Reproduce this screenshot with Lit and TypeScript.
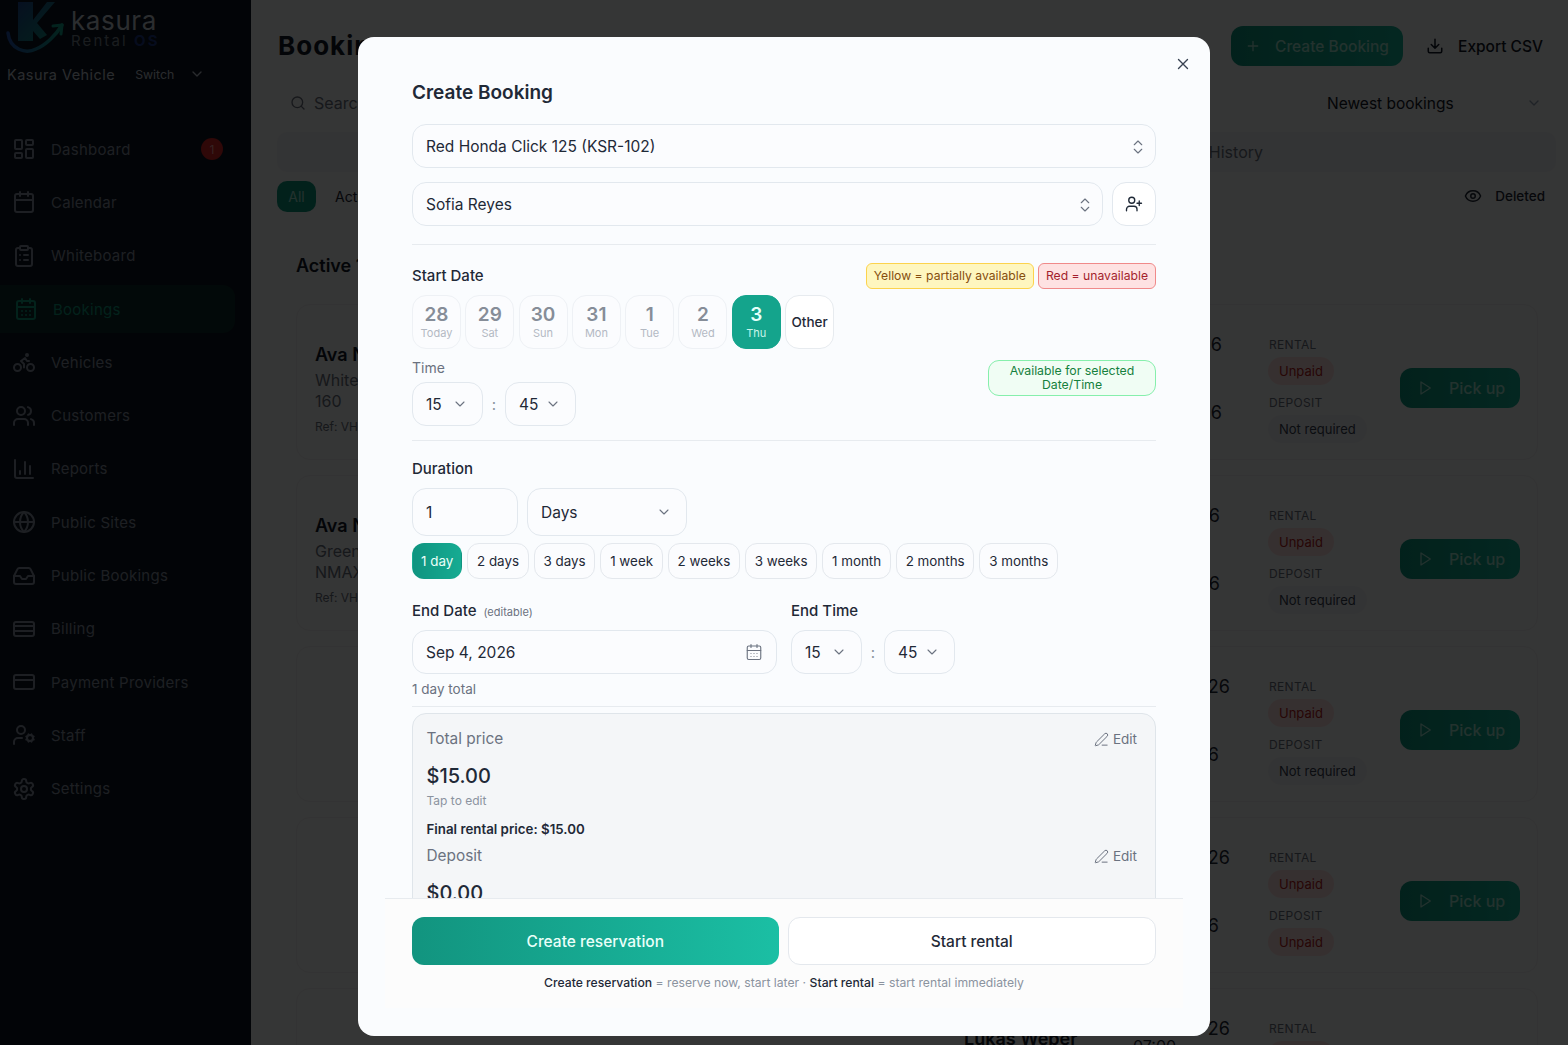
import { LitElement, html, css, svg } from "lit";
import { customElement } from "lit/decorators.js";

const ic = (body: unknown, size = 24, sw = 2, cls = "") =>
  html`<svg class="ic ${cls}" width=${size} height=${size} viewBox="0 0 24 24" fill="none" stroke="currentColor" stroke-width=${sw} stroke-linecap="round" stroke-linejoin="round">${body}</svg>`;

const I = {
  dash: svg`<rect x="3" y="3" width="7" height="9" rx="1"/><rect x="14" y="3" width="7" height="5" rx="1"/><rect x="14" y="12" width="7" height="9" rx="1"/><rect x="3" y="16" width="7" height="5" rx="1"/>`,
  cal: svg`<path d="M8 2v4M16 2v4"/><rect x="3" y="4" width="18" height="18" rx="2"/><path d="M3 10h18"/>`,
  calDays: svg`<path d="M8 2v4M16 2v4"/><rect x="3" y="4" width="18" height="18" rx="2"/><path d="M3 10h18M8 14h.01M12 14h.01M16 14h.01M8 18h.01M12 18h.01M16 18h.01"/>`,
  clip: svg`<rect x="8" y="2" width="8" height="4" rx="1"/><path d="M16 4h2a2 2 0 0 1 2 2v14a2 2 0 0 1-2 2H6a2 2 0 0 1-2-2V6a2 2 0 0 1 2-2h2M12 11h4M12 16h4M8 11h.01M8 16h.01"/>`,
  bike: svg`<circle cx="18.5" cy="17.5" r="3.5"/><circle cx="5.5" cy="17.5" r="3.5"/><circle cx="15" cy="5" r="1"/><path d="M12 17.5V14l-3-3 4-3 2 3h2"/>`,
  users: svg`<path d="M16 21v-2a4 4 0 0 0-4-4H6a4 4 0 0 0-4 4v2M16 3.128a4 4 0 0 1 0 7.744M22 21v-2a4 4 0 0 0-3-3.87"/><circle cx="9" cy="7" r="4"/>`,
  chart: svg`<path d="M3 3v16a2 2 0 0 0 2 2h16M18 17V9M13 17V5M8 17v-3"/>`,
  globe: svg`<circle cx="12" cy="12" r="10"/><path d="M12 2a14.5 14.5 0 0 0 0 20 14.5 14.5 0 0 0 0-20M2 12h20"/>`,
  inbox: svg`<path d="M22 12h-6l-2 3h-4l-2-3H2"/><path d="M5.45 5.11 2 12v6a2 2 0 0 0 2 2h16a2 2 0 0 0 2-2v-6l-3.45-6.89A2 2 0 0 0 16.76 4H7.24a2 2 0 0 0-1.79 1.11z"/>`,
  card2: svg`<rect x="2" y="5" width="20" height="14" rx="2"/><path d="M2 9h20M2 14h20"/>`,
  card: svg`<rect x="2" y="5" width="20" height="14" rx="2"/><path d="M2 10h20"/>`,
  userCog: svg`<path d="M10 15H6a4 4 0 0 0-4 4v2"/><circle cx="9" cy="7" r="4"/><circle cx="18" cy="15" r="3"/><path d="m14.305 16.53.923-.382M15.228 13.852l-.923-.383M16.852 12.228l-.383-.923M16.852 17.772l-.383.924M19.148 12.228l.383-.923M19.53 18.696l-.382-.924M20.772 13.852l.924-.383M20.772 16.148l.924.383"/>`,
  gear: svg`<path d="M12.22 2h-.44a2 2 0 0 0-2 2v.18a2 2 0 0 1-1 1.73l-.43.25a2 2 0 0 1-2 0l-.15-.08a2 2 0 0 0-2.73.73l-.22.38a2 2 0 0 0 .73 2.73l.15.1a2 2 0 0 1 1 1.72v.51a2 2 0 0 1-1 1.74l-.15.09a2 2 0 0 0-.73 2.73l.22.38a2 2 0 0 0 2.73.73l.15-.08a2 2 0 0 1 2 0l.43.25a2 2 0 0 1 1 1.73V20a2 2 0 0 0 2 2h.44a2 2 0 0 0 2-2v-.18a2 2 0 0 1 1-1.73l.43-.25a2 2 0 0 1 2 0l.15.08a2 2 0 0 0 2.73-.73l.22-.39a2 2 0 0 0-.73-2.73l-.15-.08a2 2 0 0 1-1-1.74v-.5a2 2 0 0 1 1-1.74l.15-.09a2 2 0 0 0 .73-2.73l-.22-.38a2 2 0 0 0-2.73-.73l-.15.08a2 2 0 0 1-2 0l-.43-.25a2 2 0 0 1-1-1.73V4a2 2 0 0 0-2-2z"/><circle cx="12" cy="12" r="3"/>`,
  updown: svg`<path d="m7 15 5 5 5-5M7 9l5-5 5 5"/>`,
  userPlus: svg`<path d="M16 21v-2a4 4 0 0 0-4-4H6a4 4 0 0 0-4 4v2"/><circle cx="9" cy="7" r="4"/><path d="M19 8v6M22 11h-6"/>`,
  pencil: svg`<path d="M13 21h8"/><path d="M21.174 6.812a1 1 0 0 0-3.986-3.987L3.842 16.174a2 2 0 0 0-.5.83l-1.321 4.352a.5.5 0 0 0 .623.622l4.353-1.32a2 2 0 0 0 .83-.497z"/>`,
  download: svg`<path d="M12 15V3M21 15v4a2 2 0 0 1-2 2H5a2 2 0 0 1-2-2v-4M7 10l5 5 5-5"/>`,
  eye: svg`<path d="M2.062 12.348a1 1 0 0 1 0-.696 10.75 10.75 0 0 1 19.876 0 1 1 0 0 1 0 .696 10.75 10.75 0 0 1-19.876 0"/><circle cx="12" cy="12" r="3"/>`,
  play: svg`<polygon points="6 3 20 12 6 21 6 3"/>`,
  search: svg`<path d="m21 21-4.34-4.34"/><circle cx="11" cy="11" r="8"/>`,
  plus: svg`<path d="M5 12h14M12 5v14"/>`,
  x: svg`<path d="M18 6 6 18M6 6l12 12"/>`,
  down: svg`<path d="m6 9 6 6 6-6"/>`,
};

const NAV: [string, unknown, boolean?][] = [
  ["Dashboard", I.dash], ["Calendar", I.cal], ["Whiteboard", I.clip], ["Bookings", I.calDays, true],
  ["Vehicles", I.bike], ["Customers", I.users], ["Reports", I.chart], ["Public Sites", I.globe],
  ["Public Bookings", I.inbox], ["Billing", I.card2], ["Payment Providers", I.card], ["Staff", I.userCog], ["Settings", I.gear],
];

const DATES = [["28", "Today"], ["29", "Sat"], ["30", "Sun"], ["31", "Mon"], ["1", "Tue"], ["2", "Wed"]];
const CHIPS = ["2 days", "3 days", "1 week", "2 weeks", "3 weeks", "1 month", "2 months", "3 months"];

interface Booking { name: string; line1: string; line2: string; ref: string; nm: string; a: string; aEnd: number; b: string; bEnd: number; time: string; dep: string; }
const BOOKINGS: Booking[] = [
  { name: "Ava N", line1: "White", line2: "160", ref: "Ref: VH", nm: "", a: "6", aEnd: 8, b: "6", bEnd: 8, time: "", dep: "Not required" },
  { name: "Ava N", line1: "Green", line2: "NMAX", ref: "Ref: VH", nm: "", a: "6", aEnd: 10, b: "6", bEnd: 10, time: "", dep: "Not required" },
  { name: "", line1: "", line2: "", ref: "", nm: "", a: "26", aEnd: 0, b: "6", bEnd: 11, time: "", dep: "Not required" },
  { name: "", line1: "", line2: "", ref: "", nm: "", a: "26", aEnd: 0, b: "6", bEnd: 11, time: "", dep: "Unpaid" },
  { name: "", line1: "", line2: "", ref: "", nm: "Lukas Weber", a: "26", aEnd: 0, b: "", bEnd: 0, time: "07:00", dep: "Unpaid" },
];

@customElement("app-root")
export class AppRoot extends LitElement {
  static styles = css`
    :host { display: block; height: 1045px; overflow: hidden; position: relative; font-family: Inter, "Liberation Sans", sans-serif; color: #1f2937; }
    * { box-sizing: border-box; }
    .ic { flex: none; display: block; }
    .page { display: flex; height: 1045px; background: #fbfcfc; overflow: hidden; }

    .side { width: 251px; flex: none; background: #0b1422; color: #8a94a3; }
    .logo { display: flex; height: 56px; padding-left: 6px; }
    .logo svg { margin-right: 5px; flex: none; }
    .logotxt { padding-top: 7px; }
    .logotxt b { display: block; font-weight: 400; font-size: 26px; line-height: 28px; letter-spacing: .6px; color: #c9d3dc; }
    .logotxt span { display: block; font-size: 15px; line-height: 12px; letter-spacing: 2.1px; color: #7b8894; }
    .logotxt i { font-style: normal; color: #1e3a8a; font-weight: 700; }
    .org { display: flex; align-items: center; padding-left: 7px; height: 36px; color: #c3ccd6; font-size: 14.5px; letter-spacing: .45px; }
    .org small { font-size: 12.3px; margin: 0 15px 0 20px; letter-spacing: 0; }
    .nav { margin-top: 30.5px; display: flex; flex-direction: column; }
    .item { display: flex; align-items: center; height: 53.3px; padding-left: 12px; gap: 15px; font-size: 15px; letter-spacing: .25px; }
    .item.on { color: #0f9f82; margin-right: 16px; padding-left: 14px; position: relative; }
    .item.on::before { content: ""; position: absolute; inset: 3px 0; background: #0b2c2a; border-radius: 0 12px 12px 0; }
    .item.on > * { position: relative; }
    .bdg { margin-left: auto; margin-right: 28px; width: 22px; height: 22px; border-radius: 50%; background: #dc2626; color: #fca5a5; font-size: 12px; display: flex; align-items: center; justify-content: center; }

    .main { flex: 1; padding: 0 12px 0 26px; min-width: 0; }
    .top { display: flex; align-items: center; height: 66px; padding-top: 26px; }
    .top h1 { margin: 0 auto 0 1px; font-size: 26px; line-height: 40px; font-weight: 700; color: #111827; letter-spacing: 1px; }
    .create { display: flex; align-items: center; gap: 14px; width: 172px; height: 40px; border-radius: 12px; padding-left: 14px; background: linear-gradient(90deg, #0d9c82, #14b89c); color: #a5e9d8; font-size: 15.5px; font-weight: 500; white-space: nowrap; }
    .export { display: flex; align-items: center; gap: 14px; padding-left: 23px; padding-right: 13px; font-size: 15.5px; font-weight: 500; color: #111827; white-space: nowrap; }
    .filters { display: flex; align-items: center; justify-content: space-between; height: 48px; margin-top: 13px; }
    .srch { display: flex; align-items: center; gap: 8px; padding-left: 13px; color: #6b7280; font-size: 16px; }
    .sort { display: flex; align-items: center; justify-content: space-between; width: 215px; font-size: 15.5px; margin-right: 14px; color: #111827; }
    .sort .ic { color: #94a3b8; }
    .tabs { display: flex; align-items: center; justify-content: flex-end; height: 40px; margin-top: 5px; background: #f1f5f9; border-radius: 10px; font-size: 16px; color: #6b7280; padding-right: 293px; }
    .pills { display: flex; align-items: center; height: 32px; margin-top: 8px; font-size: 14px; }
    .pill { width: 39px; height: 31px; margin-right: 19px; border-radius: 10px; background: #0d9c82; color: #a5e9d8; display: flex; align-items: center; justify-content: center; }
    .del { margin-left: auto; display: flex; align-items: center; gap: 13px; font-weight: 500; font-size: 13.5px; margin-right: 11px; color: #1f2937; }
    .sec { margin: 37px 0 0 19px; height: 34px; font-weight: 600; font-size: 18px; line-height: 34px; color: #111827; }
    .list { margin: 21px 18px 0 19px; display: flex; flex-direction: column; gap: 15px; }
    .row { height: 156px; flex: none; border: 1px solid #eef1f4; border-radius: 14px; display: grid; grid-template-columns: 649px 166px 100px 39px 131px 1fr; padding-left: 18px; }
    .who { padding-top: 38px; }
    .who b { display: block; font-size: 18px; line-height: 24px; font-weight: 600; color: #111827; }
    .who span { display: block; font-size: 16px; line-height: 21px; color: #6b7280; }
    .who span:first-of-type { margin-top: 3px; }
    .who small { display: block; font-size: 12px; line-height: 18px; color: #6b7280; margin-top: 6px; }
    .nm { padding-top: 38px; font-size: 18px; line-height: 24px; font-weight: 600; color: #111827; white-space: nowrap; }
    .mid { padding-top: 28px; font-size: 18px; line-height: 24px; text-align: right; }
    .l2 { margin-top: 44px; }
    .tm { text-align: left; margin-top: -7px; padding-left: 3px; font-size: 16px; }
    .stat { padding-top: 32px; grid-column: 5; }
    .stat label { display: block; font-size: 12px; line-height: 16px; letter-spacing: .3px; color: #6b7280; }
    .stat em { display: block; width: fit-content; font-style: normal; font-size: 13px; line-height: 28px; padding: 0 11px; border-radius: 14px; background: #f1f5f9; color: #374151; margin: 4px 0 10px -1px; }
    .stat em.red { background: #fee2e2; color: #b91c1c; }
    .act { display: flex; align-items: center; padding-top: 12px; }
    .pick { display: flex; align-items: center; gap: 16px; width: 120px; height: 40px; padding-left: 17px; border-radius: 12px; background: linear-gradient(90deg, #0d9c82, #14b89c); color: #a5e9d8; font-size: 16px; font-weight: 500; }

    .veil { position: absolute; inset: 0; background: rgba(0, 0, 0, .79); }
    .modal { position: absolute; left: 358px; top: 37px; width: 852px; height: 999px; background: #fafcfe; border-radius: 16px; overflow: hidden; display: flex; flex-direction: column; }
    .close { position: absolute; top: 18px; right: 18px; color: #374151; }
    .body { flex: 1; min-height: 0; overflow: hidden; padding: 0 54px; }
    h2 { margin: 42px 0 17px; font-size: 19px; line-height: 28px; font-weight: 600; color: #1f2937; }
    .fld { border: 1px solid #e2e8ee; border-radius: 14px; background: #fbfcfe; height: 44px; display: flex; align-items: center; justify-content: space-between; padding: 0 13px; font-size: 15.5px; color: #1f2937; }
    .fld .ic { color: #6b7280; }
    .fld .ud { margin-right: -5px; }
    .fld .dn { margin-right: 1.5px; }
    .t1 { padding-top: 1px; }
    .rowf { display: flex; gap: 9px; margin-top: 14px; }
    .rowf .fld:first-child { flex: 1; }
    .sq { width: 44px; padding: 0; justify-content: center; background: #fff; }
    .sq .ic { color: #1f2937; }
    hr { border: 0; height: 1px; background: #e7ebef; margin: 0; }
    .hd1 { margin-top: 18px; }
    .between { display: flex; justify-content: space-between; align-items: center; }
    .lab { font-size: 15px; font-weight: 500; color: #1f2937; line-height: 22px; }
    .legend { display: flex; gap: 4px; }
    .lg { height: 26px; border-radius: 6px; padding: 0 7px; font-size: 12.2px; line-height: 24px; border: 1px solid; }
    .lg.y { background: #fef6bf; border-color: #fcd34d; color: #854d0e; }
    .lg.r { background: #fee2e2; border-color: #f08a8a; color: #a31f2d; }
    .dates { display: flex; gap: 4.3px; margin-top: 6px; }
    .d { width: 49px; height: 54px; border: 1px solid #eef1f5; border-radius: 14px; background: #fbfcfe; display: flex; flex-direction: column; align-items: center; justify-content: center; color: #8b939f; }
    .d b { font-size: 19px; line-height: 22px; font-weight: 600; color: #868d98; }
    .d span { font-size: 11px; line-height: 14px; color: #b3b9c3; }
    .d.sel { background: #14a48c; border-color: #14a48c; }
    .d.sel b { color: #e6fffa; } .d.sel span { color: #c8f5ea; }
    .d.other { background: #fff; border-color: #e7ebef; font-size: 13.5px; font-weight: 500; color: #1f2937; }
    .time { display: flex; justify-content: space-between; align-items: flex-start; margin-top: 11px; }
    .tl { font-size: 14px; line-height: 16px; color: #6b7280; margin-bottom: 6px; }
    .sels { display: flex; align-items: center; }
    .mini { width: 71px; }
    .colon { width: 22px; text-align: center; color: #8b939f; font-size: 15px; }
    .colon.e { margin-top: 8px; }
    .avail { width: 168px; height: 36px; border: 1px solid #86efac; background: #f0fdf4; border-radius: 11px; color: #15803d; text-align: center; font-size: 12.3px; line-height: 14.5px; padding-top: 2.5px; }
    .hr1 { margin-top: 14px; }
    .dur { margin-top: 17px; }
    .durf { display: flex; gap: 9px; margin-top: 8px; }
    .durf .fld { height: 48px; }
    .w106 { width: 106px; } .w160 { width: 160px; }
    .chips { display: flex; gap: 4.9px; margin-top: 7px; }
    .ch { height: 36px; padding: 0 8.8px; border: 1px solid #e4e8ed; border-radius: 12px; background: #fbfcfe; display: flex; align-items: center; font-size: 13.4px; color: #1f2937; white-space: nowrap; }
    .ch.sel { background: linear-gradient(90deg, #0f9480, #16ab92); color: #eafff9; border-color: transparent; padding: 0 8px; }
    .ends { display: flex; gap: 14px; margin-top: 21px; }
    .endl { width: 365px; }
    .ed { font-size: 11px; line-height: 1; font-weight: 400; color: #6b7280; margin-left: 7px; }
    .ends .fld { margin-top: 8px; }
    .tot { font-size: 13.5px; line-height: 20px; color: #6b7280; margin-top: 5px; }
    .hr2 { margin-top: 7px; }
    .pricebox { margin-top: 6px; height: 230px; border: 1px solid #dfe5ea; border-radius: 14px; background: #f4f6f8; padding: 14px 18px 0 13.5px; }
    .pl { font-size: 15.4px; line-height: 22px; color: #6b7280; }
    .edit { display: flex; align-items: center; gap: 4px; font-size: 13.5px; color: #6b7280; }
    .amt { font-size: 20px; font-weight: 500; line-height: 28px; color: #1f2937; margin-top: 12px; }
    .tap { font-size: 12px; line-height: 16px; color: #8b939f; margin-top: 3px; }
    .fin { font-size: 13.3px; font-weight: 600; line-height: 20px; color: #1f2937; margin-top: 10px; }
    .dep { margin-top: 6px; }
    .foot { flex: none; margin: 0 27px 28px; height: 110px; background: #fcfcfc; border-top: 1px solid #e7ebef; padding: 18px 27px 0; }
    .btns { display: flex; gap: 9px; }
    .btn { flex: 1; height: 48px; border-radius: 12px; display: flex; align-items: center; justify-content: center; font-size: 15.5px; font-weight: 500; }
    .btn.p { background: linear-gradient(90deg, #12947f, #1bbfa4); color: #eafff9; }
    .btn.s { background: #fff; border: 1px solid #e4e8ed; color: #1f2937; }
    .note { text-align: center; font-size: 12.2px; line-height: 18px; margin-top: 9px; color: #8b939f; }
    .note b { font-weight: 500; color: #1f2937; }
  `;

  private side() {
    return html`<aside class="side">
      <div class="logo">
        <svg width="60" height="56" viewBox="0 0 60 56" fill="none">
          <defs>
            <linearGradient id="kg" x1="0" y1="0" x2="1" y2="1"><stop offset="0" stop-color="#1e4a96"/><stop offset="1" stop-color="#139a85"/></linearGradient>
            <linearGradient id="sw" x1="0" y1="0" x2="1" y2="0"><stop offset="0" stop-color="#2255b5"/><stop offset="1" stop-color="#12a58c"/></linearGradient>
          </defs>
          <path d="M12 2h15v18L41 2h8L31 23l10 12-7 4-7-8v10H12z" fill="url(#kg)"/>
          <path d="M2 33C4 50 20 54 30 49c10-4 20-14 26-24" stroke="url(#sw)" stroke-width="3.5" stroke-linecap="round"/>
          <path d="M47 26l9-1-1 9" stroke="#12a58c" stroke-width="3" stroke-linecap="round" stroke-linejoin="round"/>
        </svg>
        <div class="logotxt"><b>kasura</b><span>Rental <i>OS</i></span></div>
      </div>
      <div class="org">Kasura Vehicle<small>Switch</small>${ic(I.down, 16)}</div>
      <nav class="nav">
        ${NAV.map(([n, i, on], idx) => html`<div class="item ${on ? "on" : ""}">${ic(i)}<span>${n}</span>${idx === 0 ? html`<span class="bdg">1</span>` : ""}</div>`)}
      </nav>
    </aside>`;
  }

  private main() {
    return html`<main class="main">
      <div class="top"><h1>Bookings</h1>
        <div class="create">${ic(I.plus, 16)}Create Booking</div>
        <div class="export">${ic(I.download, 18)}Export CSV</div></div>
      <div class="filters"><div class="srch">${ic(I.search, 16)}Search</div><div class="sort">Newest bookings ${ic(I.down, 16)}</div></div>
      <div class="tabs">History</div>
      <div class="pills"><span class="pill">All</span>Active<div class="del">${ic(I.eye, 18)}Deleted</div></div>
      <div class="sec">Active 1</div>
      <div class="list">
        ${BOOKINGS.map((b) => html`<div class="row">
          <div class="who"><b>${b.name}</b><span>${b.line1}</span><span>${b.line2}</span><small>${b.ref}</small></div>
          <div class="nm">${b.nm}</div>
          <div class="mid">
            <div style="padding-right:${b.aEnd}px">${b.a}</div>
            ${b.time ? html`<div class="tm">${b.time}</div>` : html`<div class="l2" style="padding-right:${b.bEnd}px">${b.b}</div>`}
          </div>
          <div class="stat"><label>RENTAL</label><em class="red">Unpaid</em><label>DEPOSIT</label><em class=${b.dep === "Unpaid" ? "red" : ""}>${b.dep}</em></div>
          <div class="act"><div class="pick">${ic(I.play, 16)}Pick up</div></div>
        </div>`)}
      </div>
    </main>`;
  }

  private modal() {
    const dn = ic(I.down, 16, 1.6, "dn");
    return html`<section class="modal">
      <div class="close">${ic(I.x, 18, 1.8)}</div>
      <div class="body">
        <h2>Create Booking</h2>
        <div class="fld t1">Red Honda Click 125 (KSR-102) ${ic(I.updown, 18, 1.5, "ud")}</div>
        <div class="rowf"><div class="fld t1">Sofia Reyes ${ic(I.updown, 18, 1.5, "ud")}</div><div class="fld sq">${ic(I.userPlus, 18, 1.8)}</div></div>
        <hr class="hd1" />
        <div class="between hd1"><span class="lab">Start Date</span>
          <div class="legend"><span class="lg y">Yellow = partially available</span><span class="lg r">Red = unavailable</span></div></div>
        <div class="dates">
          ${DATES.map(([a, b]) => html`<div class="d"><b>${a}</b><span>${b}</span></div>`)}
          <div class="d sel"><b>3</b><span>Thu</span></div>
          <div class="d other">Other</div>
        </div>
        <div class="time">
          <div><div class="tl">Time</div><div class="sels"><div class="fld mini">15 ${dn}</div><span class="colon">:</span><div class="fld mini">45 ${ic(I.down, 16, 1.6, "dn")}</div></div></div>
          <div class="avail">Available for selected<br />Date/Time</div>
        </div>
        <hr class="hr1" />
        <div class="lab dur">Duration</div>
        <div class="durf"><div class="fld w106">1</div><div class="fld w160">Days ${ic(I.down, 16, 1.6, "dn")}</div></div>
        <div class="chips"><span class="ch sel">1 day</span>${CHIPS.map((c) => html`<span class="ch">${c}</span>`)}</div>
        <div class="ends">
          <div class="endl"><div class="lab">End Date<span class="ed">(editable)</span></div><div class="fld">Sep 4, 2026 ${ic(I.calDays, 18, 1.5)}</div></div>
          <div><div class="lab">End Time</div><div class="sels"><div class="fld mini">15 ${ic(I.down, 16, 1.6, "dn")}</div><span class="colon e">:</span><div class="fld mini">45 ${ic(I.down, 16, 1.6, "dn")}</div></div></div>
        </div>
        <div class="tot">1 day total</div>
        <hr class="hr2" />
        <div class="pricebox">
          <div class="between"><span class="pl">Total price</span><span class="edit">${ic(I.pencil, 15, 1.6)}Edit</span></div>
          <div class="amt">$15.00</div>
          <div class="tap">Tap to edit</div>
          <div class="fin">Final rental price: $15.00</div>
          <div class="between dep"><span class="pl">Deposit</span><span class="edit">${ic(I.pencil, 15, 1.6)}Edit</span></div>
          <div class="amt">$0.00</div>
        </div>
      </div>
      <div class="foot">
        <div class="btns"><div class="btn p">Create reservation</div><div class="btn s">Start rental</div></div>
        <div class="note"><b>Create reservation</b> = reserve now, start later · <b>Start rental</b> = start rental immediately</div>
      </div>
    </section>`;
  }

  render() {
    return html`<div class="page">${this.side()}${this.main()}</div><div class="veil"></div>${this.modal()}`;
  }
}
